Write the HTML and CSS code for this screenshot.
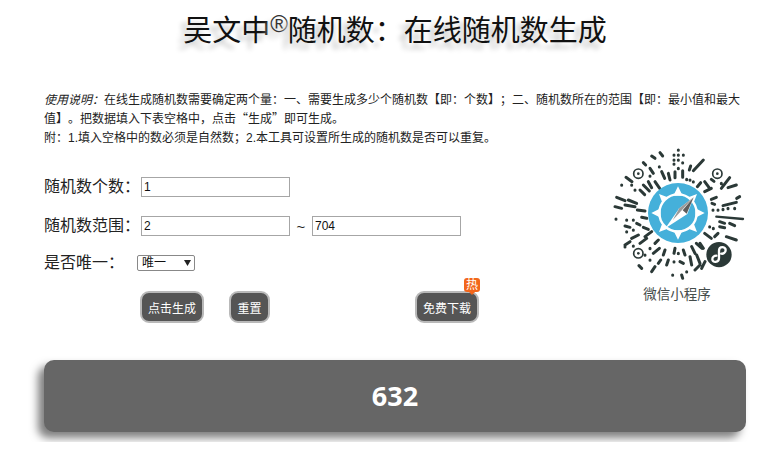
FILE: index.html
```html
<!DOCTYPE html>
<html lang="zh-CN">
<head>
<meta charset="utf-8">
<title>随机数生成</title>
<link rel="stylesheet" href="styles.css">
</head>
<body>
<div class="page">
  <h1 class="title">吴文中<sup class="reg">®</sup>随机数：在线随机数生成</h1>
  <p class="intro"><em>使用说明：</em>在线生成随机数需要确定两个量：一、需要生成多少个随机数【即：个数】；二、随机数所在的范围【即：最小值和最大值】。把数据填入下表空格中，点击<span class="cjk">“生成”</span>即可生成。<br>附：1.填入空格中的数必须是自然数；2.本工具可设置所生成的随机数是否可以重复。</p>
  <div class="main">
    <form class="form">
      <div class="row"><label class="label">随机数个数：</label><input class="field" type="text" value="1"></div>
      <div class="row"><label class="label">随机数范围：</label><input class="field" type="text" value="2"><span class="tilde">~</span><input class="field" type="text" value="704"></div>
      <div class="row row-select"><label class="label label-select">是否唯一：</label><select class="pick"><option>唯一</option><option>不唯一</option></select></div>
      <div class="actions">
        <button class="btn" type="button">点击生成</button>
        <button class="btn btn-small" type="button">重置</button>
        <span class="dl"><button class="btn" type="button">免费下载</button><span class="hot">热</span></span>
      </div>
    </form>
    <aside class="qr">
      <svg class="qr-code" viewBox="30 24 408 402" aria-label="微信小程序码">
        <g fill="none" stroke="#2b3937" stroke-width="9" stroke-linecap="round">
          <path d="M155 48l10 7M180 38l8 10M130 68l7 7M150 85l10 15M185 95l9 20M205 100l5 20M145 125l10 18M165 125l14 20M130 135l18 18M120 150l14 14M78 112l18 13"/>
          <path d="M235 30v1M222 45v1M235 45v1M250 45v1M222 60v1M235 60v1M222 72v1M248 68v1M235 85v1M178 80v1M150 108v1M65 135v1M95 135v1M105 150v1M225 95v18M248 92v20"/>
          <path d="M280 92l30-32M268 90l4-12M292 140l10-12M314 125l15 20M314 155l20-10M364 145l25-32M384 143l25-8M364 130v1M334 118l8 6M260 118v1M270 120v1M280 125v1"/>
          <path d="M334 178l15-6M369 197l40-10M419 170l-9 5M339 210v1M354 210v1M369 208v1M384 205v1M404 205v1M336 190l8 3"/>
          <path stroke-width="7" d="M349 230l80 7"/>
          <path d="M359 245l15 5M389 250l15 7M359 260l15 3M379 290l30 10M344 290l10-10M314 280l20 15M329 260v1M289 310l17 15M340 265v1"/>
          <path d="M50 172l25 10M85 180l25 10M45 200l20 5M75 195l30 5M112 210l23 3M48 237v1M80 240v1M100 240v1M125 232l15 3M75 258l15 4M110 250l10 5M80 275v1M100 270v1M130 262l15 6"/>
          <path d="M135 290l20-15M120 310l20-15M95 295l20-10M75 315l15-10M100 318v1M165 310l10-10M160 340l18-15M75 320v1M150 325v1M135 345v1"/>
          <path d="M155 395l10-15M175 370l7-10M190 345l5-15M200 375l5-15M222 340l3-15M222 365v1M240 365l10 5M218 405v1M245 405l3 10M235 340v1M250 330l5 15M275 320l10 20M300 310l10 15M270 350l5 25M290 345l10 25M285 390l15-15M305 385l10-20M150 360v1M260 395v1M125 385l-8-8"/>
          <circle cx="115" cy="101" r="14" stroke-width="5"/>
          <circle cx="352" cy="101" r="14" stroke-width="5"/>
          <circle cx="115" cy="340" r="14" stroke-width="5"/>
        </g>
        <g fill="#2b3937">
          <circle cx="115" cy="101" r="4"/>
          <circle cx="352" cy="101" r="4"/>
          <circle cx="115" cy="340" r="4"/>
          <circle cx="357" cy="344" r="38"/>
        </g>
        <path d="M337 358c0 11 20 11 20-4v-22c0-15 20-13 20-2 0 9-8 12-13 11M337 358c0-7 6-11 12-11" fill="none" stroke="#fff" stroke-width="7" stroke-linecap="round"/>
        <circle cx="234" cy="219" r="90" fill="#45b0da"/>
        <g fill="#fff">
          <circle cx="234" cy="219" r="56" fill="none" stroke="#fff" stroke-width="7"/>
          <path d="M234 139l14 28h-28zM234 299l14-28h-28zM154 219l28-14v28zM314 219l-28-14v28zM177 162l26 10-16 16zM291 162l-26 10 16 16zM177 276l26-10-16-16zM291 276l-26-10 16-16z"/>
        </g>
        <path fill="#fff" d="M281 172l-43 33-42 60 66-43z"/>
        <path fill="#9a9a9a" d="M281 172l-43 33-20 36z"/>
        <path fill="#5d5d5d" d="M281 172l-21 49-12-10z"/>
      </svg>
      <p class="qr-label">微信小程序</p>
    </aside>
  </div>
  <div class="result">632</div>
</div>
</body>
</html>
```

FILE: styles.css
```css
* { box-sizing: border-box; }
html, body { margin: 0; background: #fff; }
body { font-family: "Liberation Sans", "Noto Sans CJK SC", sans-serif; color: #222; text-spacing-trim: space-all; }
.page { padding: 0 23px 10px 44px; }
.title { margin: 0; padding-top: 10px; height: 91px; font-weight: normal; font-size: 29px; line-height: 42px; text-align: center; color: #111; text-shadow: -6px 6px 5px #c8c8c8; }
.reg { font-size: 24px; line-height: 0; vertical-align: 9px; color: #333; }
.intro { margin: 0; font-size: 12px; line-height: 19px; color: #222; height: 57px; }
.intro em { font-style: italic; }
.cjk { font-family: "Noto Sans CJK SC", sans-serif; line-height: 0; }
.main { display: flex; justify-content: space-between; }
.form { padding-top: 29px; flex: none; }
.row { display: flex; align-items: center; height: 20px; margin-bottom: 19px; }
.label { width: 97px; font-size: 16px; line-height: 20px; color: #222; flex: none; }
.field { width: 149px; height: 20px; border: 1px solid #a6a6a6; padding: 1px 2px; font: 12px "Liberation Sans", sans-serif; color: #111; background: #fff; border-radius: 0; outline: 0; }
.tilde { width: 22px; text-align: center; font-size: 15px; color: #222; }
.row-select { align-items: flex-start; height: 16px; margin-bottom: 20px; }
.label-select { width: 93px; line-height: 16px; }
.pick { appearance: none; width: 58px; height: 16px; padding: 0 0 0 4px; font: 12px "Liberation Sans", "Noto Sans CJK SC", sans-serif; color: #111; background: #fff url("data:image/svg+xml,%3Csvg xmlns='http://www.w3.org/2000/svg' width='7' height='6'%3E%3Cpath d='M0 0h7L3.5 6z' fill='%23222'/%3E%3C/svg%3E") no-repeat 46px 4px; border: 1px solid #888; border-radius: 2px; }
.actions { display: flex; align-items: flex-start; padding-left: 96px; }
.btn { width: 64px; height: 32px; padding: 0; background: #555; color: #fff; font: 12px "Liberation Sans", "Noto Sans CJK SC", sans-serif; border: 2px solid #b9b9b9; border-radius: 9px; }
.btn-small { width: 41px; margin-left: 25px; }
.dl { position: relative; display: block; margin-left: 145px; }
.hot { position: absolute; left: 49px; top: -13px; width: 16px; height: 14px; background: #f2661b; color: #fff; border-radius: 3px; font-size: 12px; line-height: 14px; text-align: center; }
.hot::after { content: ""; position: absolute; left: 5px; top: 14px; border: 3px solid transparent; border-top-color: #f2661b; }
.qr { width: 136px; flex: none; }
.qr-code { display: block; width: 136px; height: 134px; }
.qr-label { margin: 4px 0 0; padding-right: 2px; text-align: center; font-size: 13.5px; line-height: 18px; color: #444c4a; }
.result { margin-top: 37px; height: 72px; background: #666; border-radius: 10px; color: #fff; font-family: "Open Sans", "Noto Sans CJK SC", sans-serif; font-weight: 700; font-size: 27px; line-height: 72px; text-align: center; box-shadow: -6px 6px 8px #7f7f7f; }
```
